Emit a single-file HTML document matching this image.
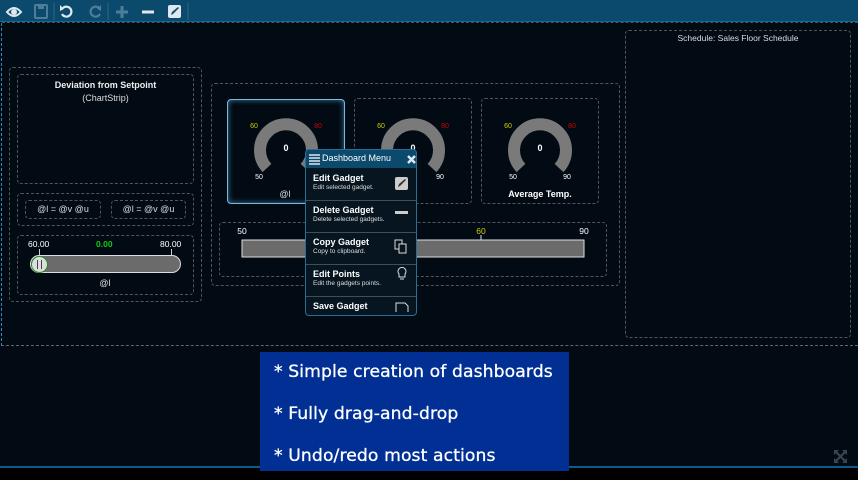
<!DOCTYPE html>
<html><head><style>
*{margin:0;padding:0;box-sizing:border-box}
body{width:858px;height:480px;background:#000;font-family:"Liberation Sans",sans-serif;position:relative;overflow:hidden;color:#fff}
.a{position:absolute}
.d{position:absolute;border:1px dashed #555;border-radius:4px}
.t{position:absolute;font-size:9px;color:#ddd;text-align:center}
.mi{position:absolute;left:0;width:110px;height:32px;border-bottom:1px solid #3a5060;padding:4px 0 0 7px}
.mi b{display:block;font-size:9px;color:#fff}
.mi span{display:block;font-size:6.5px;color:#ddd;margin-top:1px}
.bl{position:absolute;left:274px;font-size:17.2px;color:#fff;font-family:"DejaVu Sans",sans-serif;letter-spacing:0.1px;-webkit-text-stroke:0.3px #fff}
</style></head><body>
<div class="a" style="left:0;top:0;width:858px;height:467px;background:#020b14"></div>
<div class="a" style="left:0;top:466px;width:858px;height:2px;background:#0a5a8a"></div>
<div class="a" style="left:0;top:0;width:858px;height:22px;background:#0b4a6c;border-bottom:1px solid #0f6a96"></div>
<svg class="a" style="left:0;top:0" width="200" height="22">
<g fill="none" stroke="#dfe8ee" stroke-width="2"><path d="M7 12 Q14 4 21 12 Q14 20 7 12Z"/></g><circle cx="14" cy="12" r="3" fill="#dfe8ee"/>
<rect x="35" y="5" width="12" height="13" rx="1" fill="none" stroke="#4d7e99" stroke-width="2"/><rect x="38" y="5" width="6" height="4" fill="#4d7e99"/>
<line x1="54" y1="3" x2="54" y2="20" stroke="#2f6684"/>
<path d="M63 8 A5 5 0 1 1 62 14" fill="none" stroke="#dfe8ee" stroke-width="2.2"/><path d="M60 5 L64 9 L60 11Z" fill="#dfe8ee"/>
<path d="M99 8 A5 5 0 1 0 100 14" fill="none" stroke="#4d7e99" stroke-width="2.2"/><path d="M101 5 L97 9 L101 11Z" fill="#4d7e99"/>
<line x1="108" y1="3" x2="108" y2="20" stroke="#2f6684"/>
<path d="M122 6 V18 M116 12 H128" stroke="#4d7e99" stroke-width="3"/>
<path d="M142 12 H154" stroke="#dfe8ee" stroke-width="3"/>
<rect x="168" y="5" width="13" height="13" rx="2" fill="#dfe8ee"/><path d="M171 15 L172 12 L178 7 L179 8 L173 14Z" fill="#0b4a6c"/>
<line x1="188" y1="3" x2="188" y2="20" stroke="#2f6684"/>
</svg>
<div class="a" style="left:1px;top:23px;width:857px;height:323px;border-left:1px dashed #2a8ac0;border-bottom:1px dashed #666"></div>
<div class="a" style="left:2px;top:22px;width:856px;border-top:1px dashed #555"></div>
<div class="d" style="left:625px;top:30px;width:226px;height:308px"></div>
<div class="t" style="left:625px;top:33px;width:226px;font-size:8.5px">Schedule: Sales Floor Schedule</div>
<div class="d" style="left:9px;top:67px;width:193px;height:235px"></div>
<div class="d" style="left:17px;top:74px;width:177px;height:110px"></div>
<div class="t" style="left:17px;top:80px;width:177px;font-weight:bold;color:#eee">Deviation from Setpoint</div>
<div class="t" style="left:17px;top:93px;width:177px">(ChartStrip)</div>
<div class="d" style="left:17px;top:193px;width:177px;height:33px"></div>
<div class="d" style="left:25px;top:200px;width:76px;height:19px"></div>
<div class="d" style="left:111px;top:200px;width:75px;height:19px"></div>
<div class="t" style="left:25px;top:204px;width:76px">@l = @v @u</div>
<div class="t" style="left:111px;top:204px;width:75px">@l = @v @u</div>
<div class="d" style="left:17px;top:235px;width:177px;height:60px"></div>
<div class="t" style="left:28px;top:239px;font-size:8.5px;color:#fff">60.00</div>
<div class="t" style="left:96px;top:239px;font-size:8.5px;color:#1c1;font-weight:bold">0.00</div>
<div class="t" style="left:160px;top:239px;font-size:8.5px;color:#fff">80.00</div>
<div class="a" style="left:39px;top:249px;width:1px;height:6px;background:#ccc"></div>
<div class="a" style="left:171px;top:249px;width:1px;height:6px;background:#ccc"></div>
<div class="a" style="left:30px;top:255px;width:151px;height:18px;border-radius:9px;background:#6b6b6b;border:1px solid #ddd"></div>
<div class="a" style="left:31px;top:256px;width:17px;height:17px;border-radius:50%;background:#ddd;border:1px solid #2a8a2a"></div>
<div class="a" style="left:37px;top:260px;width:5px;height:9px;border-left:1px solid #444;border-right:1px solid #444"></div>
<div class="t" style="left:90px;top:278px;width:30px">@l</div>
<div class="d" style="left:211px;top:83px;width:409px;height:203px"></div>
<div class="a" style="left:227px;top:99px;width:118px;height:105px;border:1px solid #7ab8e0;border-radius:4px;box-shadow:0 0 6px #3a7aa0 inset"></div>
<div class="d" style="left:354px;top:98px;width:118px;height:106px"></div>
<div class="d" style="left:481px;top:98px;width:118px;height:106px"></div>
<div class="d" style="left:219px;top:222px;width:388px;height:55px"></div>
<svg class="a" style="left:0;top:0" width="858" height="480">
<g fill="none" stroke="#7a7a7a" stroke-width="12">
<path d="M267 168 A26 26 0 1 1 305 168"/>
<path d="M394 168 A26 26 0 1 1 432 168"/>
<path d="M521 168 A26 26 0 1 1 559 168"/>
</g>
<g font-size="7" font-family="Liberation Sans" text-anchor="middle">
<text x="254" y="128" fill="#cc0">60</text><text x="318" y="128" fill="#c00">80</text><text x="259" y="179" fill="#fff">50</text><text x="313" y="179" fill="#fff">90</text>
<text x="381" y="128" fill="#cc0">60</text><text x="445" y="128" fill="#c00">80</text><text x="440" y="179" fill="#fff">90</text>
<text x="508" y="128" fill="#cc0">60</text><text x="572" y="128" fill="#c00">80</text><text x="513" y="179" fill="#fff">50</text><text x="567" y="179" fill="#fff">90</text>
</g>
<g font-size="9" font-family="Liberation Sans" font-weight="bold" fill="#fff" text-anchor="middle">
<text x="286" y="151">0</text><text x="413" y="151">0</text><text x="540" y="151">0</text>
<text x="540" y="197">Average Temp.</text>
</g>
<text x="285" y="197" font-size="9" fill="#ddd" text-anchor="middle" font-family="Liberation Sans">@l</text>
<rect x="242" y="240" width="342" height="17" fill="#6b6b6b" stroke="#ddd" stroke-width="1"/>
<line x1="481" y1="235" x2="481" y2="240" stroke="#ddd"/>
<g font-size="8.5" font-family="Liberation Sans" text-anchor="middle"><text x="242" y="234" fill="#fff">50</text><text x="481" y="234" fill="#cc0">60</text><text x="584" y="234" fill="#fff">90</text></g>
<g fill="#3a4550"><path d="M834 450 L839 450 L834 455Z M847 450 L842 450 L847 455Z M834 463 L839 463 L834 458Z M847 463 L842 463 L847 458Z"/><path d="M836 452 L845 461 M845 452 L836 461" stroke="#3a4550" stroke-width="2"/></g>
</svg>
<div class="a" style="left:305px;top:149px;width:112px;height:167px;background:#061520;border:1px solid #2a6e96;border-radius:4px;overflow:hidden">
<div class="a" style="left:0;top:0;width:112px;height:18px;background:#0b4a6c;font-size:9px;padding:3px 0 0 16px">Dashboard Menu</div>
<svg class="a" style="left:2px;top:4px" width="110" height="12"><path d="M1 1H12M1 4H12M1 7H12M1 10H12" stroke="#dfe8ee" stroke-width="1.5"/><path d="M100 2L107 9M107 2L100 9" stroke="#dfe8ee" stroke-width="2.5"/></svg>
<div class="mi" style="top:19px"><b>Edit Gadget</b><span>Edit selected gadget.</span></div>
<div class="mi" style="top:51px"><b>Delete Gadget</b><span>Delete selected gadgets.</span></div>
<div class="mi" style="top:83px"><b>Copy Gadget</b><span>Copy to clipboard.</span></div>
<div class="mi" style="top:115px"><b>Edit Points</b><span>Edit the gadgets points.</span></div>
<div class="mi" style="top:147px;border:none"><b>Save Gadget</b></div>
<svg class="a" style="left:0;top:0" width="112" height="167">
<rect x="89" y="27" width="13" height="13" rx="2" fill="#ccc"/><path d="M92 37 L93 34 L99 29 L100 30 L94 36Z" fill="#333"/>
<rect x="89" y="61" width="13" height="3" fill="#ccc"/>
<g fill="none" stroke="#ddd"><rect x="89" y="90" width="7" height="9"/><rect x="93" y="94" width="7" height="9" fill="#061520"/><path d="M93 124 a4 4 0 1 1 6 0 v3 h-6z M94 129h4"/><path d="M90 162 v-9 h9 l3 3 v6"/></g>
</svg>
</div>
<div class="a" style="left:260px;top:352px;width:309px;height:119px;background:#012f94"></div>
<div class="bl" style="top:362px">* Simple creation of dashboards</div>
<div class="bl" style="top:404px">* Fully drag-and-drop</div>
<div class="bl" style="top:446px">* Undo/redo most actions</div>
</body></html>
